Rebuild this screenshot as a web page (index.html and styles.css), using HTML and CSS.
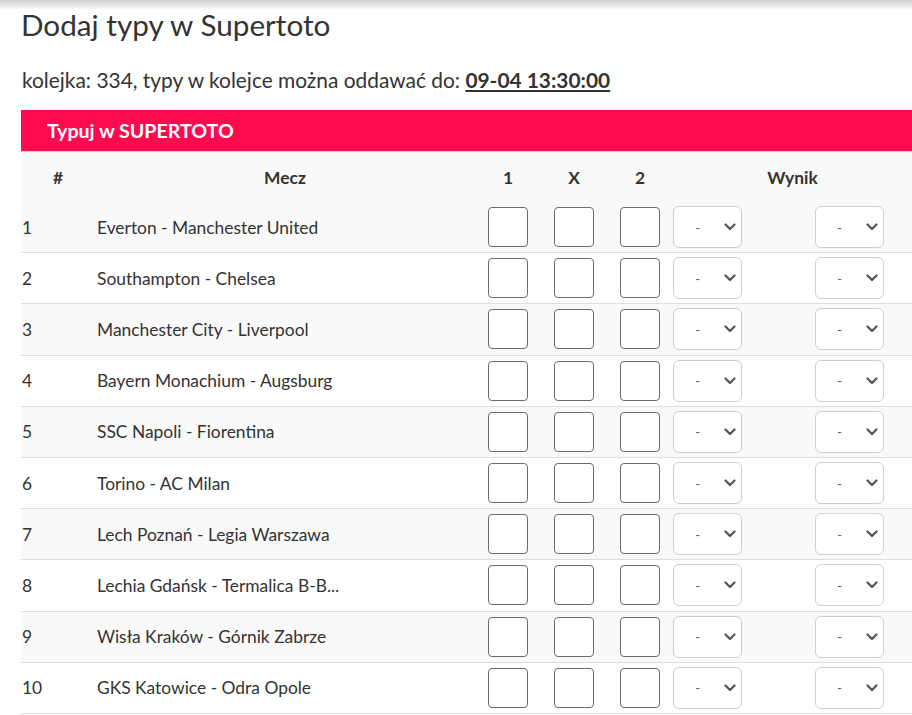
FILE: index.html
```html
<!DOCTYPE html>
<html lang="pl">
<head>
<meta charset="utf-8">
<title>Dodaj typy w Supertoto</title>
<link rel="stylesheet" href="styles.css">
</head>
<body>
<div class="topshadow"></div>
<main class="page">
  <h1 class="title">Dodaj typy w Supertoto</h1>
  <p class="info">kolejka: 334, typy w kolejce można oddawać do: <a class="deadline" href="#">09-04 13:30:00</a></p>
  <section class="panel">
    <div class="panel-head">Typuj w SUPERTOTO</div>
    <table class="toto">
      <colgroup>
        <col class="c-num"><col class="c-match"><col class="c-pick"><col class="c-pick"><col class="c-pick"><col class="c-res">
      </colgroup>
      <thead>
        <tr><th>#</th><th>Mecz</th><th>1</th><th>X</th><th>2</th><th>Wynik</th></tr>
      </thead>
      <tbody id="rows"></tbody>
    </table>
  </section>
</main>
<script>
  var matches = [
    "Everton - Manchester United",
    "Southampton - Chelsea",
    "Manchester City - Liverpool",
    "Bayern Monachium - Augsburg",
    "SSC Napoli - Fiorentina",
    "Torino - AC Milan",
    "Lech Poznań - Legia Warszawa",
    "Lechia Gdańsk - Termalica B-B...",
    "Wisła Kraków - Górnik Zabrze",
    "GKS Katowice - Odra Opole"
  ];
  var sel = '<span class="sel"><span class="dash">-</span><svg class="chev" width="12" height="8" viewBox="0 0 12 8"><path d="M1.5 1.5 L6 6 L10.5 1.5" fill="none" stroke="#555" stroke-width="2.2" stroke-linecap="round" stroke-linejoin="round"/></svg></span>';
  var html = "";
  for (var i = 0; i < matches.length; i++) {
    html += '<tr><td class="num">' + (i + 1) + '</td><td class="match">' + matches[i] + '</td>' +
      '<td class="pick"><span class="box"></span></td>' +
      '<td class="pick"><span class="box"></span></td>' +
      '<td class="pick"><span class="box"></span></td>' +
      '<td class="res"><div class="sels">' + sel + sel + '</div></td></tr>';
  }
  document.getElementById("rows").innerHTML = html;
</script>
</body>
</html>
```

FILE: styles.css
```css
html, body {
  margin: 0;
  padding: 0;
  background: #fff;
  overflow: hidden;
}
body {
  font-family: Lato, "Open Sans", sans-serif;
  color: #333;
}
.topshadow {
  height: 10px;
  background: linear-gradient(#cfcfcf, rgba(255,255,255,0));
  margin-bottom: -10px;
}
.page {
  padding-left: 21px;
}
.title {
  margin: 0;
  padding-top: 7px;
  font-size: 29.7px;
  font-weight: 400;
  line-height: 36px;
  color: #333;
}
.info {
  margin: 24px 0 0 1px;
  font-size: 20.9px;
  line-height: 26px;
}
.deadline {
  color: #333;
  font-weight: 700;
  text-decoration: underline;
}
.panel {
  margin-top: 17px;
  width: 891px;
}
.panel-head {
  background: #ff0a4f;
  color: #fff;
  font-weight: 700;
  font-size: 19.6px;
  height: 41px;
  line-height: 41px;
  padding-left: 26px;
  border-bottom: 1px solid #f7c3d1;
}
.toto {
  width: 891px;
  border-collapse: collapse;
  table-layout: fixed;
  font-size: 17.4px;
}
.c-num { width: 74px; }
.c-match { width: 380px; }
.c-pick { width: 66px; }
.c-res { width: 239px; }
.toto thead tr {
  background: #f9f9f9;
}
.toto th {
  font-weight: 700;
  font-size: 17.4px;
  height: 50px;
  padding: 0;
  text-align: center;
  vertical-align: middle;
}
.toto tbody tr {
  border-bottom: 1px solid #dedede;
}
.toto tbody tr:nth-child(odd) {
  background: #f9f9f9;
}
.toto td {
  height: 50.2px;
  padding: 0;
  vertical-align: middle;
}
.num {
  padding-left: 1px !important;
}
.match {
  padding-left: 2px !important;
}
.pick {
  text-align: center;
}
.box {
  display: inline-block;
  width: 38px;
  height: 38px;
  border: 1.5px solid #6b6b6b;
  border-radius: 4px;
  background: #fff;
  vertical-align: middle;
}
.sels {
  display: flex;
  gap: 73px;
}
.sel {
  box-sizing: border-box;
  width: 69px;
  height: 42px;
  border: 1px solid #cfcfcf;
  border-radius: 6px;
  background: #fff;
  display: flex;
  align-items: center;
  padding-left: 21px;
}
.dash {
  color: #666;
  font-size: 14px;
}
.chev {
  margin-left: 24px;
}
```
